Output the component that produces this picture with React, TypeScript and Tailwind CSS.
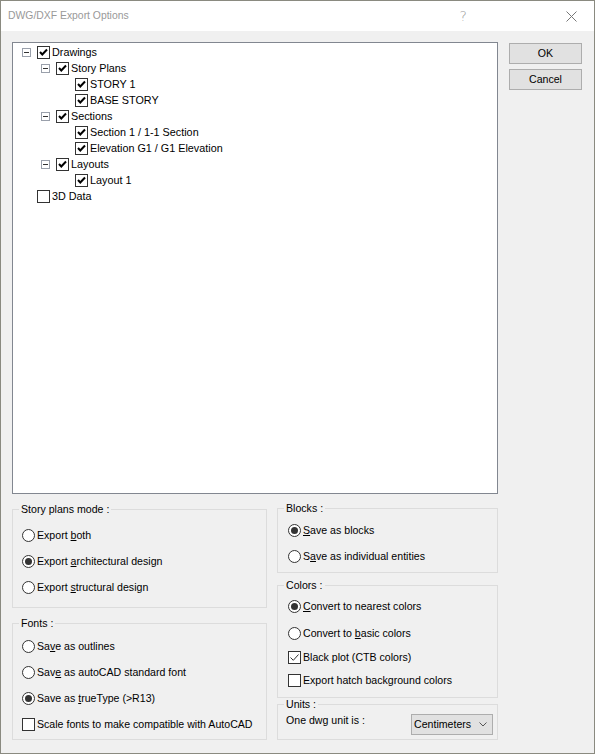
import React from "react";

type TreeNode = { label: string; level: number; checked: boolean; expander?: boolean };

const treeNodes: TreeNode[] = [
  { label: "Drawings", level: 0, checked: true, expander: true },
  { label: "Story Plans", level: 1, checked: true, expander: true },
  { label: "STORY 1", level: 2, checked: true },
  { label: "BASE STORY", level: 2, checked: true },
  { label: "Sections", level: 1, checked: true, expander: true },
  { label: "Section 1 / 1-1 Section", level: 2, checked: true },
  { label: "Elevation G1 / G1 Elevation", level: 2, checked: true },
  { label: "Layouts", level: 1, checked: true, expander: true },
  { label: "Layout 1", level: 2, checked: true },
  { label: "3D Data", level: 0, checked: false },
];

const indent = ["pl-[9px]", "pl-[28px]", "pl-[47px]"];

const CheckBox = ({ checked, thin }: { checked: boolean; thin?: boolean }) => (
  <span className="w-[13px] h-[13px] border border-[#333] bg-white flex items-center justify-center shrink-0">
    {checked && (
      <svg width="11" height="11" viewBox="0 0 11 11">
        <path
          d={thin ? "M1.5 5.5 L4.3 8.3 L9.5 2.5" : "M2 5 L4.3 7.5 L9 2.5"}
          stroke={thin ? "#333" : "#000"}
          strokeWidth={thin ? 1 : 2}
          fill="none"
        />
      </svg>
    )}
  </span>
);

const Radio = ({ checked }: { checked?: boolean }) => (
  <span className="w-[13px] h-[13px] rounded-full border border-[#333] bg-white flex items-center justify-center shrink-0">
    {checked && <span className="w-[7px] h-[7px] rounded-full bg-[#333]" />}
  </span>
);

const Expander = () => (
  <span className="w-[9px] h-[9px] border border-[#9aa0ab] bg-white flex items-center justify-center shrink-0">
    <span className="w-[5px] h-px bg-[#333]" />
  </span>
);

// Win32-style group box: legend sits on the top border
const GroupBox = ({
  title,
  className,
  bodyClass,
  children,
}: {
  title: string;
  className: string;
  bodyClass: string;
  children: React.ReactNode;
}) => (
  <fieldset className={`border border-[#dcdcdc] box-border ${className}`}>
    <legend className="ml-[6px] px-[2px] leading-[13px]">{title}</legend>
    <div className={bodyClass}>{children}</div>
  </fieldset>
);

const Option = ({
  control,
  children,
  className = "",
}: {
  control: React.ReactNode;
  children: React.ReactNode;
  className?: string;
}) => (
  <div className={`flex items-center ${className}`}>
    {control}
    <span className="ml-[2px] leading-[13px]">{children}</span>
  </div>
);

const Button = ({ children }: { children: React.ReactNode }) => (
  <button className="w-[73px] h-[21px] bg-[#e1e1e1] border border-[#adadad] flex items-center justify-center leading-none">
    {children}
  </button>
);

const App = () => {
  return (
    <div className="w-[595px] h-[754px] border border-[#8a8a80] bg-[#f0f0f0] flex flex-col font-['Liberation_Sans',Arial,sans-serif] text-[10.6px] text-black overflow-hidden">
      {/* title bar */}
      <div className="h-[30px] bg-white flex items-center pl-[7px] shrink-0">
        <span className="text-[#999] text-[10.4px]">DWG/DXF Export Options</span>
        <span className="ml-auto mr-[99px] text-[#999] text-[14px] font-['DejaVu_Sans',sans-serif] font-light">?</span>
        <svg width="11" height="11" viewBox="0 0 11 11" className="mr-[17px]">
          <path d="M0.5 0.5 L10.5 10.5 M10.5 0.5 L0.5 10.5" stroke="#777" strokeWidth="1" />
        </svg>
      </div>

      <div className="flex flex-col pl-[11px]">
        <div className="flex mt-[11px]">
          {/* drawings tree */}
          <div className="w-[486px] h-[452px] border border-[#828790] bg-white pt-[1px] box-border">
            {treeNodes.map((n) => (
              <div key={n.label} className={`h-[16px] flex items-center ${indent[n.level]}`}>
                <span className="w-[9px] flex shrink-0">{n.expander && <Expander />}</span>
                <span className="ml-[6px] flex">
                  <CheckBox checked={n.checked} />
                </span>
                <span className="ml-[2px] text-[10.8px] leading-[13px]">{n.label}</span>
              </div>
            ))}
          </div>

          <div className="flex flex-col ml-[11px] mt-[1px] gap-[5px]">
            <Button>OK</Button>
            <Button>Cancel</Button>
          </div>
        </div>

        <div className="flex gap-[10px]">
          <div className="flex flex-col w-[255px]">
            <GroupBox title="Story plans mode :" className="mt-[9px] h-[105px]" bodyClass="pl-[9px] pt-[6px]">
              <Option control={<Radio />} className="h-[26px]">
                Export <u>b</u>oth
              </Option>
              <Option control={<Radio checked />} className="h-[26px]">
                Export <u>a</u>rchitectural design
              </Option>
              <Option control={<Radio />} className="h-[26px]">
                Export <u>s</u>tructural design
              </Option>
            </GroupBox>

            <GroupBox title="Fonts :" className="mt-[9px] h-[123px]" bodyClass="pl-[9px] pt-[3px]">
              <Option control={<Radio />} className="h-[26px]">
                Sa<u>v</u>e as outlines
              </Option>
              <Option control={<Radio />} className="h-[26px]">
                Sav<u>e</u> as autoCAD standard font
              </Option>
              <Option control={<Radio checked />} className="h-[26px]">
                Save as <u>t</u>rueType (&gt;R13)
              </Option>
              <Option control={<CheckBox checked={false} />} className="h-[26px]">
                Scale fonts to make compatible with AutoCAD
              </Option>
            </GroupBox>
          </div>

          <div className="flex flex-col w-[221px]">
            <GroupBox title="Blocks :" className="mt-[8px] h-[71px]" bodyClass="pl-[10px] pt-[2px]">
              <Option control={<Radio checked />} className="h-[26px]">
                <u>S</u>ave as blocks
              </Option>
              <Option control={<Radio />} className="h-[26px]">
                S<u>a</u>ve as individual entities
              </Option>
            </GroupBox>

            <GroupBox title="Colors :" className="mt-[6px] h-[119px]" bodyClass="pl-[10px] pt-[3px]">
              <Option control={<Radio checked />} className="h-[22px]">
                <u>C</u>onvert to nearest colors
              </Option>
              <Option control={<Radio />} className="h-[22px] mt-[5px]">
                Convert to <u>b</u>asic colors
              </Option>
              <Option control={<CheckBox checked thin />} className="h-[22px] mt-[2px]">
                Black plot (CTB colors)
              </Option>
              <Option control={<CheckBox checked={false} />} className="h-[22px] mt-[1px]">
                Export hatch background colors
              </Option>
            </GroupBox>

            <GroupBox title="Units :" className="h-[42px]" bodyClass="pl-[8px] pt-[3px]">
              <div className="flex items-start">
                <span className="leading-[13px]">One dwg unit is :</span>
                <div className="ml-auto mr-[4px] w-[82px] h-[21px] bg-[#e1e1e1] border border-[#adadad] flex items-center pl-[2px] pr-[5px] box-border">
                  <span className="leading-none">Centimeters</span>
                  <svg width="8" height="5" viewBox="0 0 8 5" className="ml-auto">
                    <path d="M0.5 0.5 L4 4 L7.5 0.5" stroke="#555" strokeWidth="1" fill="none" />
                  </svg>
                </div>
              </div>
            </GroupBox>
          </div>
        </div>
      </div>
    </div>
  );
};

export default App;
